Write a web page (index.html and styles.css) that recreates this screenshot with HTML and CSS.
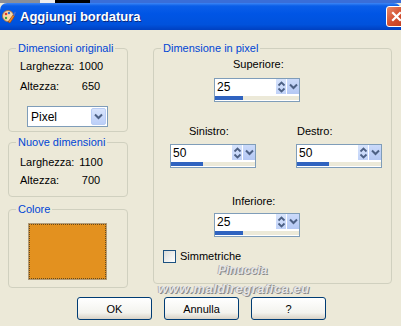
FILE: index.html
```html
<!DOCTYPE html>
<html lang="it">

<head>
    <meta charset="UTF-8">
    <title>Aggiungi bordatura</title>
    <link rel="stylesheet" href="styles.css">
</head>

<body>
    <div class="topstrip"></div>

    <!-- Barra del titolo -->
    <div class="titlebar">
        <svg class="title-icon" width="14" height="15" viewBox="0 0 14 15">
            <circle cx="6" cy="7" r="5.5" fill="#f6d9a8" stroke="#b06a30" stroke-width="0.8"/>
            <circle cx="4" cy="5" r="1.3" fill="#e03a28"/>
            <circle cx="7" cy="4" r="1.2" fill="#2f6fd8"/>
            <circle cx="4" cy="9" r="1.2" fill="#3aa040"/>
            <path d="M6 13 L11 6 L12.5 7 L8 14 Z" fill="#f08a28" stroke="#8a3a10" stroke-width="0.6"/>
            <path d="M11 6 L13 2.5 L13.8 3.2 L12.5 7 Z" fill="#4a6fd0"/>
        </svg>
        <span class="title-text">Aggiungi bordatura</span>
        <div class="close-btn">
            <svg width="13" height="13" viewBox="0 0 13 13">
                <path d="M3 3 L10 10 M10 3 L3 10" stroke="#fff" stroke-width="2.2" stroke-linecap="square"/>
            </svg>
        </div>
    </div>

    <div class="client">
        <div class="columns">
            <!-- Colonna sinistra -->
            <div class="left-col">
                <fieldset class="group group-orig">
                    <legend>Dimensioni originali</legend>
                    <div class="info-row">
                        <span class="info-label">Larghezza:</span>
                        <span class="info-value">1000</span>
                    </div>
                    <div class="info-row">
                        <span class="info-label">Altezza:</span>
                        <span class="info-value">650</span>
                    </div>
                    <div class="combo">
                        <span class="combo-text">Pixel</span>
                        <span class="combo-btn">
                            <svg width="9" height="7" viewBox="0 0 9 7">
                                <path d="M1 1.5 L4.5 5 L8 1.5" fill="none" stroke="#4d6185" stroke-width="2"/>
                            </svg>
                        </span>
                    </div>
                </fieldset>

                <fieldset class="group group-new">
                    <legend>Nuove dimensioni</legend>
                    <div class="info-row">
                        <span class="info-label">Larghezza:</span>
                        <span class="info-value">1100</span>
                    </div>
                    <div class="info-row">
                        <span class="info-label">Altezza:</span>
                        <span class="info-value">700</span>
                    </div>
                </fieldset>

                <fieldset class="group group-color">
                    <legend>Colore</legend>
                    <div class="swatch">
                        <div class="swatch-inner"></div>
                    </div>
                </fieldset>
            </div>

            <!-- Dimensione in pixel -->
            <fieldset class="group group-pixel">
                <legend>Dimensione in pixel</legend>

                <div class="lbl lbl-top">Superiore:</div>
                <div class="spin spin-center">
                    <div class="spin-row">
                        <span class="spin-val">25</span>
                        <span class="spin-ud">
                            <svg width="9" height="14" viewBox="0 0 9 14">
                                <path d="M1.5 5.5 L4.5 2.5 L7.5 5.5 M1.5 8.5 L4.5 11.5 L7.5 8.5" fill="none" stroke="#4d6185" stroke-width="1.8"/>
                            </svg>
                        </span>
                        <span class="spin-dd">
                            <svg width="9" height="7" viewBox="0 0 9 7">
                                <path d="M1 1.5 L4.5 5 L8 1.5" fill="none" stroke="#4d6185" stroke-width="2"/>
                            </svg>
                        </span>
                    </div>
                    <div class="spin-bar"><div class="spin-fill" style="width: 28px"></div></div>
                </div>

                <div class="side-row">
                    <div class="side-col">
                        <div class="lbl lbl-left">Sinistro:</div>
                        <div class="spin">
                            <div class="spin-row">
                                <span class="spin-val">50</span>
                                <span class="spin-ud">
                                    <svg width="9" height="14" viewBox="0 0 9 14">
                                        <path d="M1.5 5.5 L4.5 2.5 L7.5 5.5 M1.5 8.5 L4.5 11.5 L7.5 8.5" fill="none" stroke="#4d6185" stroke-width="1.8"/>
                                    </svg>
                                </span>
                                <span class="spin-dd">
                                    <svg width="9" height="7" viewBox="0 0 9 7">
                                        <path d="M1 1.5 L4.5 5 L8 1.5" fill="none" stroke="#4d6185" stroke-width="2"/>
                                    </svg>
                                </span>
                            </div>
                            <div class="spin-bar"><div class="spin-fill" style="width: 32px"></div></div>
                        </div>
                    </div>
                    <div class="side-col">
                        <div class="lbl lbl-right">Destro:</div>
                        <div class="spin">
                            <div class="spin-row">
                                <span class="spin-val">50</span>
                                <span class="spin-ud">
                                    <svg width="9" height="14" viewBox="0 0 9 14">
                                        <path d="M1.5 5.5 L4.5 2.5 L7.5 5.5 M1.5 8.5 L4.5 11.5 L7.5 8.5" fill="none" stroke="#4d6185" stroke-width="1.8"/>
                                    </svg>
                                </span>
                                <span class="spin-dd">
                                    <svg width="9" height="7" viewBox="0 0 9 7">
                                        <path d="M1 1.5 L4.5 5 L8 1.5" fill="none" stroke="#4d6185" stroke-width="2"/>
                                    </svg>
                                </span>
                            </div>
                            <div class="spin-bar"><div class="spin-fill" style="width: 32px"></div></div>
                        </div>
                    </div>
                </div>

                <div class="lbl lbl-bottom">Inferiore:</div>
                <div class="spin spin-center spin-bottom">
                    <div class="spin-row">
                        <span class="spin-val">25</span>
                        <span class="spin-ud">
                            <svg width="9" height="14" viewBox="0 0 9 14">
                                <path d="M1.5 5.5 L4.5 2.5 L7.5 5.5 M1.5 8.5 L4.5 11.5 L7.5 8.5" fill="none" stroke="#4d6185" stroke-width="1.8"/>
                            </svg>
                        </span>
                        <span class="spin-dd">
                            <svg width="9" height="7" viewBox="0 0 9 7">
                                <path d="M1 1.5 L4.5 5 L8 1.5" fill="none" stroke="#4d6185" stroke-width="2"/>
                            </svg>
                        </span>
                    </div>
                    <div class="spin-bar"><div class="spin-fill" style="width: 28px"></div></div>
                </div>

                <div class="check-row">
                    <span class="checkbox"></span>
                    <span>Simmetriche</span>
                </div>
            </fieldset>
        </div>

        <!-- Pulsanti -->
        <div class="buttons">
            <button>OK</button>
            <button>Annulla</button>
            <button>?</button>
        </div>
    </div>

    <!-- Filigrana -->
    <div class="wm wm-name">Pinuccia</div>
    <div class="wm wm-site">www.maldiregrafica.eu</div>
</body>

</html>
```

FILE: styles.css
```css
body {
    margin: 0;
    width: 401px;
    height: 326px;
    overflow: hidden;
    position: relative;
    background-color: #ece9d8;
    font-family: "Liberation Sans", Arial, sans-serif;
    font-size: 11px;
    color: #000;
}

.topstrip {
    height: 3px;
    background: linear-gradient(to right, #8a8f99 0 40px, #eeeeee 40px 55px, #000 55px 90px, #3a6ed8 90px);
}

.titlebar {
    height: 27px;
    display: flex;
    align-items: center;
    padding-left: 2px;
    border-radius: 7px 7px 0 0;
    background: linear-gradient(#3d86f5 0, #0a5ee8 3px, #0055e5 40%, #0052dc 80%, #0040c0 100%);
}

.title-icon {
    margin-right: 4px;
}

.title-text {
    color: #fff;
    font-weight: bold;
    font-size: 13px;
    text-shadow: 1px 1px #0a2a80;
}

.close-btn {
    margin-left: auto;
    margin-right: -6px;
    width: 19px;
    height: 19px;
    border: 1px solid #fff;
    border-radius: 3px;
    display: flex;
    align-items: center;
    justify-content: center;
    background: linear-gradient(135deg, #e88a6a, #d45030 50%, #c03a1c);
}

.client {
    padding-top: 12px;
}

.columns {
    display: flex;
    padding-left: 8px;
    gap: 25px;
}

.left-col {
    width: 120px;
}

.group {
    margin: 0;
    padding: 0;
    border: 1px solid #d0d0bf;
    border-radius: 4px;
    min-width: 0;
}

.group legend {
    color: #0046d5;
    padding: 0 2px;
    margin-left: 7px;
    line-height: 13px;
}

.info-row {
    display: flex;
    padding-left: 11px;
    line-height: 13px;
}

.info-label {
    width: 56px;
}

.info-value {
    width: 30px;
    text-align: center;
}

.group-orig {
    padding-top: 5px;
    padding-bottom: 4px;
}

.group-orig .info-row + .info-row {
    margin-top: 7px;
}

.combo {
    margin: 13px 0 0 18px;
    width: 79px;
    height: 19px;
    border: 1px solid #7f9db9;
    background: #fff;
    display: flex;
    align-items: center;
}

.combo-text {
    flex: 1;
    padding-left: 3px;
    font-size: 12px;
}

.combo-btn {
    width: 15px;
    height: 17px;
    margin-right: 1px;
    border: 1px solid #b9cdf5;
    border-radius: 2px;
    background: linear-gradient(#d8e4fc, #bccff8);
    display: flex;
    align-items: center;
    justify-content: center;
    box-sizing: border-box;
}

.group-new {
    margin-top: 4px;
    padding-top: 7px;
    padding-bottom: 9px;
}

.group-new .info-row + .info-row {
    margin-top: 5px;
}

.group-color {
    margin-top: 6px;
    padding-top: 7px;
    padding-bottom: 7px;
}

.swatch {
    margin-left: 19px;
    width: 77px;
    height: 55px;
    border: 1px solid #b09a78;
    padding: 0;
}

.swatch-inner {
    height: 53px;
    background-color: #e3911f;
    border: 1px dotted #6a4a18;
}

.group-pixel {
    width: 237px;
    height: 240px;
}

.lbl {
    line-height: 13px;
    font-size: 11px;
}

.lbl-top {
    margin: 3px 0 0 79px;
}

.spin {
    width: 84px;
    height: 22px;
    border: 1px solid #7f9db9;
    background: #fff;
}

.spin-center {
    margin: 7px 0 0 60px;
}

.spin-row {
    height: 16px;
    display: flex;
    align-items: flex-start;
}

.spin-val {
    flex: 1;
    padding-left: 2px;
    font-size: 12px;
    line-height: 16px;
}

.spin-ud {
    width: 10px;
    height: 15px;
    background: linear-gradient(#d8e4fc, #c0d2f8);
    display: flex;
    align-items: center;
    justify-content: center;
}

.spin-dd {
    width: 12px;
    height: 15px;
    margin-left: 1px;
    background: linear-gradient(#cbdafa, #b4c8f4);
    display: flex;
    align-items: center;
    justify-content: center;
}

.spin-bar {
    margin-top: 1px;
    height: 4px;
    background: #ece9d8;
}

.spin-fill {
    height: 4px;
    background: #2f63c0;
}

.side-row {
    display: flex;
    margin: 23px 0 0 16px;
    gap: 40px;
}

.lbl-left {
    margin-left: 19px;
}

.lbl-right {
    margin-left: 1px;
}

.side-col .spin {
    margin-top: 6px;
}

.lbl-bottom {
    margin: 27px 0 0 78px;
}

.spin-bottom {
    margin-top: 5px;
}

.check-row {
    display: flex;
    align-items: center;
    gap: 4px;
    margin: 13px 0 0 9px;
    line-height: 13px;
}

.checkbox {
    width: 11px;
    height: 11px;
    border: 1px solid #1c5180;
    background: linear-gradient(135deg, #dcdcd7, #fff);
}

.buttons {
    display: flex;
    gap: 12px;
    padding-left: 77px;
    margin-top: 9px;
}

button {
    width: 75px;
    height: 23px;
    padding: 0;
    border: 1px solid #003c74;
    border-radius: 3px;
    background: linear-gradient(#ffffff, #f3f3ee 70%, #d8d2c6);
    font-family: "Liberation Sans", Arial, sans-serif;
    font-size: 11px;
    color: #000;
}

.wm {
    position: absolute;
    color: #e6e6e6;
    font-weight: bold;
    font-style: italic;
    text-shadow: 1px 1px 0 #8a8a8a, -1px 0 0 #b0b0b0;
}

.wm-name {
    left: 218px;
    top: 263px;
    font-size: 12px;
}

.wm-site {
    left: 158px;
    top: 281px;
    font-size: 13px;
    letter-spacing: 0.5px;
}
```
